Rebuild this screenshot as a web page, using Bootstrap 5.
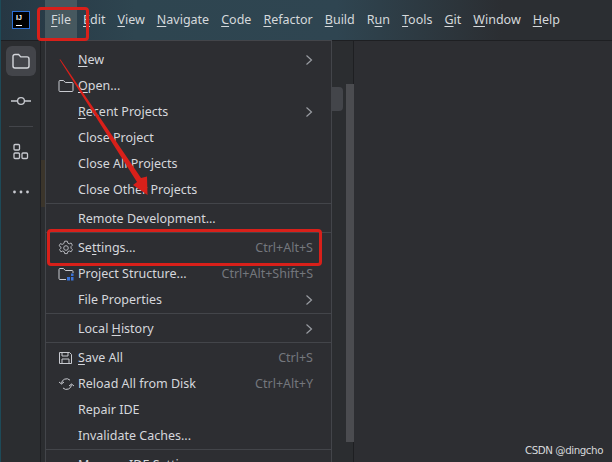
<!DOCTYPE html>
<html lang="en">
  <head>
    <meta charset="UTF-8" />
    <title>IntelliJ IDEA File menu</title>
    <link href="https://cdn.jsdelivr.net/npm/bootstrap@5.3.2/dist/css/bootstrap.min.css" rel="stylesheet" />
    <style>
      html, body { height: 100%; overflow: hidden; }
      body {
        background-color: #2d2e32;
        color: #d5d7dc;
        font-family: "Noto Sans", "Liberation Sans", sans-serif;
        font-size: 12.5px;
      }
      .ide-frame { width: 612px; height: 462px; position: relative; overflow: hidden; border-left: 1px solid #1d4a58; }
      u { text-decoration-thickness: 1px; text-underline-offset: 2px; text-decoration-skip-ink: none; }

      .title-bar {
        height: 41px;
        padding: 0 0 0 12px;
        flex-wrap: nowrap;
        justify-content: flex-start;
        background: linear-gradient(90deg, #263743 0, #2e4550 22%, #2f4551 55%, #2b2e32 82%);
        border-bottom: 1px solid #1e1f22;
      }
      .app-logo {
        width: 16px; height: 16px; background: #000; outline: 1px solid #2a6fd6;
        margin-right: 16px; flex: none; padding: 2px 3px; display: flex; flex-direction: column; justify-content: space-between;
      }
      .app-logo b { color: #fff; font: bold 7px/7px "Liberation Sans", sans-serif; letter-spacing: 0; }
      .app-logo i { display: block; width: 6px; height: 1px; background: #fff; }
      .menu-word { color: #d5d9dc; padding: 0 6px; height: 40px; line-height: 40px; white-space: nowrap; }
      .menu-word.is-open { background: #46585f; }

      .work-area { height: 421px; }
      .tool-strip { width: 40px; flex: none; background: #2b2d30; border-right: 1px solid #1e1f22; padding-top: 5px; gap: 10px; }
      .tool-btn { width: 30px; height: 30px; border-radius: 6px; }
      .tool-btn.is-active { background: #43454a; }
      .tool-rule { width: 24px; height: 1px; background: #43454a; }
      .side-panel { width: 313px; flex: none; background: #2b2d30; border-right: 1px solid #1e1f22; }
      .warm-strip { width: 4px; height: 47px; margin-top: 119px; background: #3b352b; }
      .editor-pane { background: #2d2e32; }

      .file-menu {
        --bs-dropdown-bg: #2d2e32;
        --bs-dropdown-border-color: #43454a;
        --bs-dropdown-border-radius: 0;
        --bs-dropdown-padding-y: 5px;
        --bs-dropdown-font-size: 12.5px;
        --bs-dropdown-color: #d5d7dc;
        --bs-dropdown-divider-bg: #43454a;
        position: absolute;
        left: 44px; top: 40px;
        width: 287px; height: 430px;
        overflow: hidden;
      }
      .file-menu .dropdown-divider { margin: 1px 0; opacity: 1; }
      .menu-row { height: 26px; padding: 2px 18px 0 12px; color: #d5d7dc; white-space: nowrap; }
      .menu-row .row-icon { width: 20px; flex: none; display: flex; align-items: center; }
      .menu-row .row-key { margin-left: auto; color: #74777d; }
      .menu-row .row-more { margin-left: auto; display: flex; }

      .menu-thumb { position: absolute; left: 331px; top: 87px; width: 11px; height: 24px; background: #43454a; border-radius: 0 4px 4px 0; }
      .panel-scroll { position: absolute; left: 345px; top: 84px; width: 8px; height: 358px; background: #4b4c50; }
      .mark-box { position: absolute; z-index: 1001; border: 3px solid #d8201a; border-radius: 4px; }
      .mark-file { left: 36px; top: 7px; width: 52px; height: 34px; }
      .mark-settings { left: 46px; top: 229px; width: 275px; height: 37px; }
      .mark-arrow { position: absolute; z-index: 1001; left: -1px; top: 0; }
      .watermark { position: absolute; z-index: 1002; right: 9px; bottom: 5px; color: #d6d8da; font: 10.3px/14px "DejaVu Sans", sans-serif; letter-spacing: -.45px; }
    </style>
  </head>
  <body>
    <div class="ide-frame">
      <nav class="navbar title-bar">
        <div class="app-logo"><b>IJ</b><i></i></div>
        <span class="menu-word is-open"><u>F</u>ile</span>
        <span class="menu-word"><u>E</u>dit</span>
        <span class="menu-word"><u>V</u>iew</span>
        <span class="menu-word"><u>N</u>avigate</span>
        <span class="menu-word"><u>C</u>ode</span>
        <span class="menu-word"><u>R</u>efactor</span>
        <span class="menu-word"><u>B</u>uild</span>
        <span class="menu-word">R<u>u</u>n</span>
        <span class="menu-word"><u>T</u>ools</span>
        <span class="menu-word"><u>G</u>it</span>
        <span class="menu-word"><u>W</u>indow</span>
        <span class="menu-word"><u>H</u>elp</span>
      </nav>

      <div class="d-flex work-area">
        <aside class="tool-strip d-flex flex-column align-items-center">
          <div class="tool-btn is-active d-flex align-items-center justify-content-center">
            <svg width="20" height="20" viewBox="0 0 20 20" fill="none" stroke="#d5d7dc" stroke-width="1.4"><path d="M2 5.500a2 2 0 0 1 2-2h3.600l2.200 2.400H16a2 2 0 0 1 2 2V15a2 2 0 0 1-2 2H4a2 2 0 0 1-2-2z"/></svg>
          </div>
          <div class="tool-btn d-flex align-items-center justify-content-center">
            <svg width="20" height="20" viewBox="0 0 20 20" fill="none" stroke="#c8cad0" stroke-width="1.3"><circle cx="10" cy="10" r="3.400"/><path d="M0 10h6.600M13.400 10H20"/></svg>
          </div>
          <div class="tool-rule"></div>
          <div class="tool-btn d-flex align-items-center justify-content-center">
            <svg width="18" height="18" viewBox="0 0 18 18" fill="none" stroke="#c8cad0" stroke-width="1.3"><rect x="2" y="1.500" width="5.500" height="5.500" rx="1"/><rect x="2" y="10" width="5.500" height="5.500" rx="1"/><rect x="10" y="10" width="5.500" height="5.500" rx="1"/></svg>
          </div>
          <div class="tool-btn d-flex align-items-center justify-content-center">
            <svg width="18" height="6" viewBox="0 0 18 6" fill="#c8cad0"><circle cx="2.500" cy="3" r="1.400"/><circle cx="9" cy="3" r="1.400"/><circle cx="15.500" cy="3" r="1.400"/></svg>
          </div>
        </aside>
        <div class="side-panel"><div class="warm-strip"></div></div>
        <div class="editor-pane flex-grow-1"></div>
      </div>

      <div class="menu-thumb"></div>
      <div class="panel-scroll"></div>

      <div class="dropdown-menu show file-menu">
        <div class="menu-row d-flex align-items-center"><span class="row-icon"></span><span class="row-name"><u>N</u>ew</span><span class="row-more"><svg width="8" height="12" viewBox="0 0 8 12" fill="none" stroke="#9a9da3" stroke-width="1.2"><path d="M1.500 1.500 6.500 6l-5 4.500"/></svg></span></div>
        <div class="menu-row d-flex align-items-center"><span class="row-icon"><svg width="16" height="14" viewBox="0 0 16 14" fill="none" stroke="#c8cad0" stroke-width="1"><path d="M1 2.500a1 1 0 0 1 1-1h3.500l1.800 2H14a1 1 0 0 1 1 1V11.500a1 1 0 0 1-1 1H2a1 1 0 0 1-1-1z"/></svg></span><span class="row-name"><u>O</u>pen...</span></div>
        <div class="menu-row d-flex align-items-center"><span class="row-icon"></span><span class="row-name"><u>R</u>ecent Projects</span><span class="row-more"><svg width="8" height="12" viewBox="0 0 8 12" fill="none" stroke="#9a9da3" stroke-width="1.2"><path d="M1.500 1.500 6.500 6l-5 4.500"/></svg></span></div>
        <div class="menu-row d-flex align-items-center"><span class="row-icon"></span><span class="row-name">Close Project</span></div>
        <div class="menu-row d-flex align-items-center"><span class="row-icon"></span><span class="row-name">Close All Projects</span></div>
        <div class="menu-row d-flex align-items-center"><span class="row-icon"></span><span class="row-name">Close Other Projects</span></div>
        <hr class="dropdown-divider" />
        <div class="menu-row d-flex align-items-center"><span class="row-icon"></span><span class="row-name">Remote Development...</span></div>
        <hr class="dropdown-divider" />
        <div class="menu-row d-flex align-items-center"><span class="row-icon"><svg width="16" height="16" viewBox="0 0 16 16" fill="none" stroke="#b4b6bc" stroke-width="1"><circle cx="8" cy="8" r="2.300"/><path d="M6.700 1.200h2.600l.5 1.900 1.500.7 1.800-.8 1.300 2.200-1.400 1.400v1.600l1.400 1.400-1.300 2.200-1.800-.8-1.500.7-.5 1.900H6.700l-.5-1.900-1.500-.7-1.800.8-1.300-2.200 1.400-1.400V7.200L1.100 5.800l1.300-2.200 1.800.8 1.500-.7z"/></svg></span><span class="row-name">Se<u>t</u>tings...</span><span class="row-key">Ctrl+Alt+S</span></div>
        <div class="menu-row d-flex align-items-center"><span class="row-icon"><svg width="16" height="14" viewBox="0 0 16 14" fill="none" stroke="#c8cad0" stroke-width="1"><path d="M8 12.500H2a1 1 0 0 1-1-1V2.500a1 1 0 0 1 1-1h3.500l1.800 2H14a1 1 0 0 1 1 1V6"/><path fill="#3b74d8" stroke="none" d="M9 10h3v3.500H9zM13 10h2.500v3.500H13zM13 6.500h2.500V9H13z"/></svg></span><span class="row-name">Project Structure...</span><span class="row-key">Ctrl+Alt+Shift+S</span></div>
        <div class="menu-row d-flex align-items-center"><span class="row-icon"></span><span class="row-name">File Properties</span><span class="row-more"><svg width="8" height="12" viewBox="0 0 8 12" fill="none" stroke="#9a9da3" stroke-width="1.2"><path d="M1.500 1.500 6.500 6l-5 4.500"/></svg></span></div>
        <hr class="dropdown-divider" />
        <div class="menu-row d-flex align-items-center"><span class="row-icon"></span><span class="row-name">Local <u>H</u>istory</span><span class="row-more"><svg width="8" height="12" viewBox="0 0 8 12" fill="none" stroke="#9a9da3" stroke-width="1.2"><path d="M1.500 1.500 6.500 6l-5 4.500"/></svg></span></div>
        <hr class="dropdown-divider" />
        <div class="menu-row d-flex align-items-center"><span class="row-icon"><svg width="15" height="14" viewBox="0 0 15 14" fill="none" stroke="#c8cad0" stroke-width="1"><path d="M1.500 1.500h10l2 2v9h-12z"/><path d="M4 1.500v3.500h6V1.500M4 12.500V8h7v4.500"/></svg></span><span class="row-name"><u>S</u>ave All</span><span class="row-key">Ctrl+S</span></div>
        <div class="menu-row d-flex align-items-center"><span class="row-icon"><svg width="16" height="14" viewBox="0 0 16 14" fill="none" stroke="#c8cad0" stroke-width="1"><path d="M3.500 6.500A5 5 0 0 1 12 3.200M13.500 7.500A5 5 0 0 1 5 11M1 5l2.500 2L6 5M11 9l2.500-2 2.500 2"/></svg></span><span class="row-name">Reload All from Disk</span><span class="row-key">Ctrl+Alt+Y</span></div>
        <div class="menu-row d-flex align-items-center"><span class="row-icon"></span><span class="row-name">Repair IDE</span></div>
        <div class="menu-row d-flex align-items-center"><span class="row-icon"></span><span class="row-name">Invalidate Caches...</span></div>
        <hr class="dropdown-divider" />
        <div class="menu-row d-flex align-items-center"><span class="row-icon"></span><span class="row-name">Manage IDE Settings</span></div>
      </div>

      <div class="mark-box mark-file"></div>
      <div class="mark-box mark-settings"></div>
      <svg class="mark-arrow" width="612" height="462" viewBox="0 0 612 462"><path fill="#d8201a" d="M59.500 59.500 60.500 59.500 141 178 147 176.500 147.500 195 133 185 137 182z"/></svg>
      <div class="watermark">CSDN @dingcho</div>
    </div>
    <script src="https://cdn.jsdelivr.net/npm/bootstrap@5.3.2/dist/js/bootstrap.bundle.min.js"></script>
  </body>
</html>
